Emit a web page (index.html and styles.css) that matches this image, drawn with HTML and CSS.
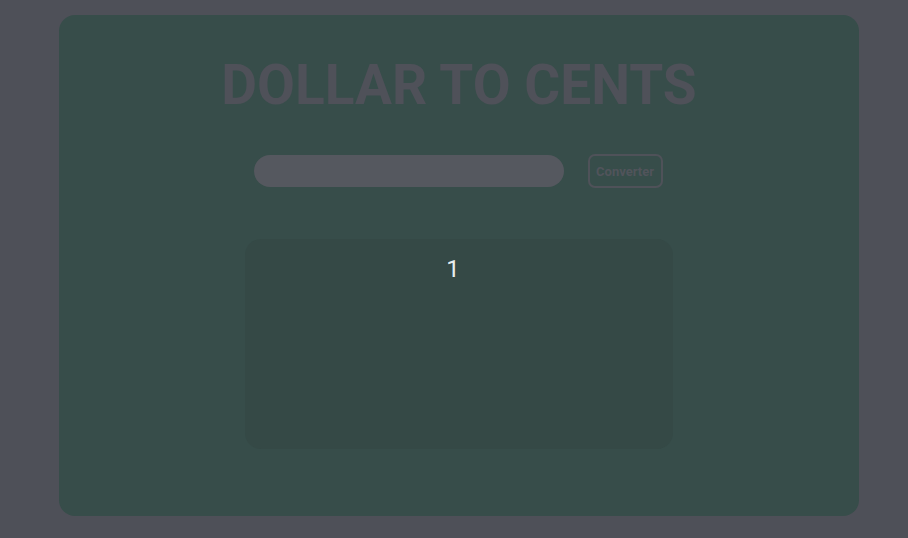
FILE: index.html
```html
<!DOCTYPE html>
<html>
<head>
<meta charset="utf-8">
<link rel="stylesheet" href="styles.css">
</head>
<body>
<main class="card">
  <h1 class="title">DOLLAR TO CENTS</h1>
  <div class="form">
    <input class="amount" type="text">
    <button class="convert">Converter</button>
  </div>
  <section class="result">
    <span class="value">1</span>
  </section>
</main>
</body>
</html>
```
FILE: styles.css
```css
html, body {
  margin: 0;
  padding: 0;
  background: #4e5058;
  font-family: Roboto, "Liberation Sans", sans-serif;
}
body {
  padding: 15px 0 0 10px;
  height: 538px;
  box-sizing: border-box;
}
.card {
  width: 800px;
  height: 501px;
  margin: 0 auto;
  background: #374d4a;
  border-radius: 16px;
  display: flex;
  flex-direction: column;
  align-items: center;
  box-sizing: border-box;
  padding-top: 38px;
}
.title {
  margin: 0;
  font-size: 55px;
  font-weight: 700;
  line-height: 64px;
  color: #4f5159;
}
.form {
  margin-top: 37px;
  margin-right: 2px;
  display: flex;
  align-items: center;
  gap: 24px;
}
.amount {
  width: 310px;
  height: 32px;
  box-sizing: border-box;
  border: none;
  border-radius: 16px;
  background: #55585f;
  outline: none;
  padding: 0 14px;
}
.convert {
  width: 75px;
  height: 34px;
  box-sizing: border-box;
  background: transparent;
  border: 2px solid #4f5259;
  border-radius: 7px;
  color: #51545b;
  font-family: Roboto, "Liberation Sans", sans-serif;
  font-weight: 700;
  font-size: 13px;
  padding: 0;
}
.result {
  margin-top: 51px;
  width: 428px;
  height: 210px;
  background: #354946;
  border-radius: 16px;
  display: flex;
  justify-content: center;
  padding: 16px 12px 0 0;
  box-sizing: border-box;
}
.value {
  color: #e8eef0;
  font-size: 24px;
  line-height: 28px;
}
```
